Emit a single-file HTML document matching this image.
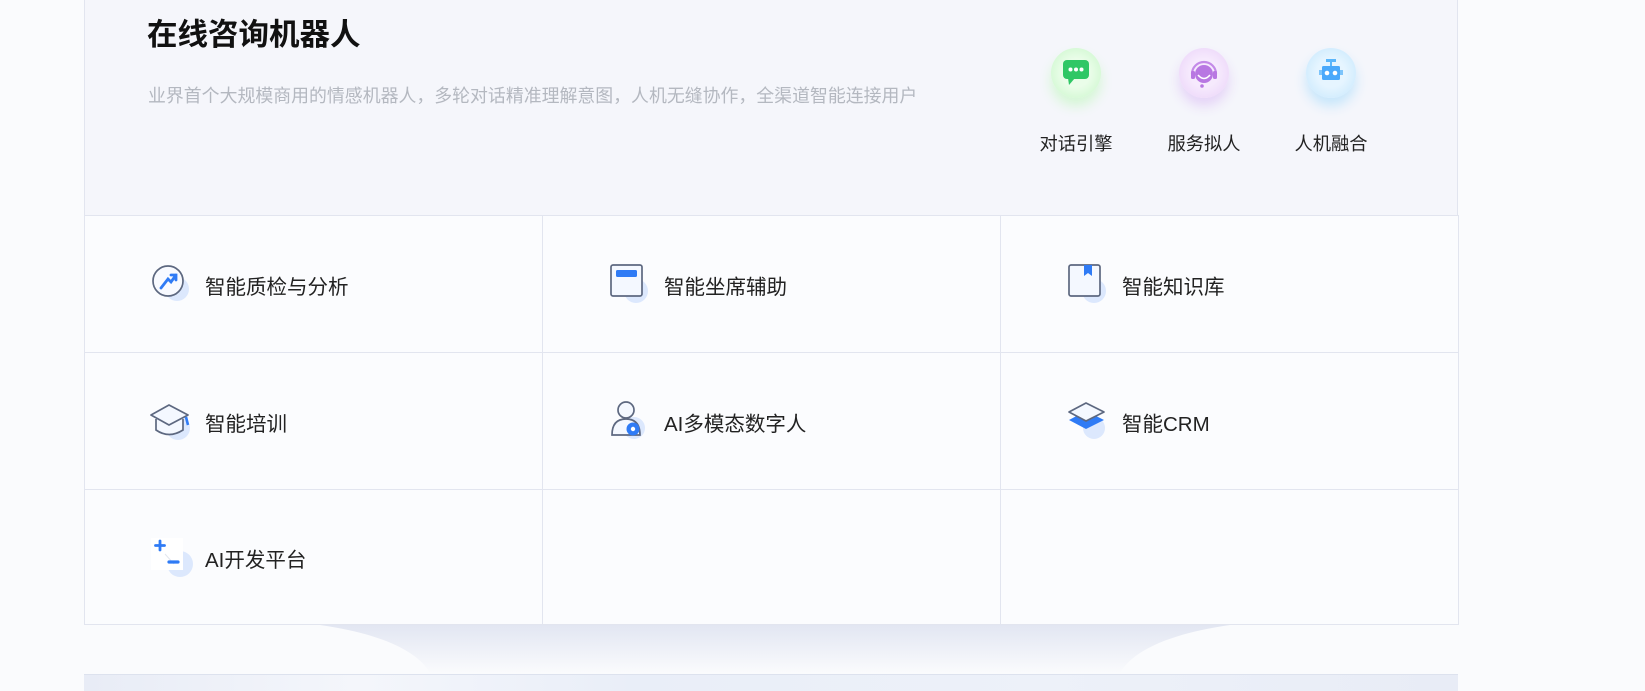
<!DOCTYPE html>
<html><head><meta charset="utf-8"><style>
*{margin:0;padding:0;box-sizing:border-box}
body{width:1645px;height:691px;overflow:hidden;background:#fafbfd;font-family:"Liberation Sans","Noto Sans CJK SC",sans-serif;position:relative;color:#222}
.top{position:absolute;left:84px;top:0;width:1374px;height:216px;background:#f5f6fb;border-left:1px solid #e2e5ef;border-right:1px solid #e2e5ef}
h1{position:absolute;left:147px;top:10px;font-size:30.5px;font-weight:bold;color:#111}
.sub{position:absolute;left:148px;top:82px;font-size:17.9px;color:#b4b8c0}
.feat{position:absolute;top:48px;width:120px;text-align:center;font-size:18.3px;color:#222}
.feat .c{width:50px;height:50px;border-radius:50%;margin:0 auto 32px}
.grid{position:absolute;left:84px;top:215px;width:1375px;height:410px;border:1px solid #e2e5ef;background:#fbfcfe}
.v{position:absolute;top:215px;width:1px;height:410px;background:#e2e5ef}
.h{position:absolute;left:84px;width:1375px;height:1px;background:#e2e5ef}
.cell{position:absolute;font-size:20.5px;color:#222;display:flex;align-items:center}
.cell svg{margin-right:10px}
.curve{position:absolute;left:320px;top:625px;width:910px;height:48px;background:linear-gradient(#e2e6f2,#fafbfd);clip-path:path('M0 0 H910 C840 10 810 30 800 48 H110 C100 30 70 10 0 0 Z')}
.banner{position:absolute;left:84px;top:674px;width:1374px;height:17px;background:linear-gradient(90deg,#e8ecf6,#f4f6fb 20%,#e9eef8 40%,#edf1f9 70%,#e8ecf6);border-top:1px solid #dde2ee}
</style></head><body>
<div class="top"></div>
<h1>在线咨询机器人</h1>
<div class="sub">业界首个大规模商用的情感机器人，多轮对话精准理解意图，人机无缝协作，全渠道智能连接用户</div>
<div class="feat" style="left:1016px"><div class="c" style="background:radial-gradient(circle,#eafde9 40%,#c6f6c7);box-shadow:0 8px 12px #d4f7d4"><svg width="50" height="50"><rect x="12" y="12" width="26" height="19" rx="4" fill="#2fc765"/><path d="M17 30 L18 37 L24 30Z" fill="#2fc765"/><circle cx="19.5" cy="21.5" r="2" fill="#fff"/><circle cx="25" cy="21.5" r="2" fill="#fff"/><circle cx="30.5" cy="21.5" r="2" fill="#fff"/></svg></div>对话引擎</div>
<div class="feat" style="left:1144px"><div class="c" style="background:radial-gradient(circle,#f6eafd 40%,#e9d0f8);box-shadow:0 8px 12px #e5d3f7"><svg width="50" height="50"><path d="M13 26 A12 12 0 0 1 37 26" stroke="#c48ae8" stroke-width="2.2" fill="none"/><circle cx="25" cy="26" r="9" fill="#b877e2"/><path d="M19 27 Q25 34 31 27" stroke="#fff" stroke-width="1.6" fill="none"/><rect x="12" y="23" width="4" height="8" rx="1.5" fill="#b877e2"/><rect x="34" y="23" width="4" height="8" rx="1.5" fill="#b877e2"/><circle cx="23" cy="38" r="1.8" fill="#b877e2"/></svg></div>服务拟人</div>
<div class="feat" style="left:1271px"><div class="c" style="background:radial-gradient(circle,#e6f5ff 40%,#c3e6fd);box-shadow:0 8px 12px #c6e6fb"><svg width="50" height="50"><rect x="20" y="11" width="10" height="3" fill="#5bb6fb"/><rect x="24" y="13" width="2" height="5" fill="#5bb6fb"/><rect x="16" y="18" width="18" height="14" rx="1.5" fill="#4aa9fb"/><rect x="13" y="22" width="3" height="5" fill="#7cc4fb"/><rect x="34" y="22" width="3" height="5" fill="#7cc4fb"/><circle cx="21" cy="25" r="2.3" fill="#fff"/><circle cx="29" cy="25" r="2.3" fill="#fff"/></svg></div>人机融合</div>

<div class="grid"></div>
<div class="v" style="left:542px"></div><div class="v" style="left:1000px"></div>
<div class="h" style="top:352px"></div><div class="h" style="top:489px"></div>

<div class="cell" style="left:150px;top:263px"><svg width="45" height="44"><circle cx="27" cy="26" r="12" fill="#dce8fd"/><circle cx="18" cy="18" r="15" fill="#f8faff" stroke="#5d6880" stroke-width="1.7"/><path d="M11 25 L18 16 L21 19 L26 12 M21 12 H26 V17" stroke="#2f7bf5" stroke-width="2.8" fill="none" stroke-linecap="round"/></svg>智能质检与分析</div>
<div class="cell" style="left:609px;top:263px"><svg width="45" height="44"><circle cx="27" cy="28" r="12" fill="#dce8fd"/><rect x="2" y="2" width="31" height="31" rx="2" fill="#f4f8ff" stroke="#5d6880" stroke-width="1.7"/><rect x="7" y="7" width="21" height="7" rx="1.5" fill="#2f7bf5"/></svg>智能坐席辅助</div>
<div class="cell" style="left:1067px;top:263px"><svg width="45" height="44"><circle cx="27" cy="28" r="12" fill="#dce8fd"/><rect x="2" y="2" width="31" height="31" rx="2" fill="#f4f8ff" stroke="#5d6880" stroke-width="1.7"/><path d="M17 2 H25 V13 L21 10 L17 13Z" fill="#2f7bf5"/></svg>智能知识库</div>

<div class="cell" style="left:150px;top:400px"><svg width="45" height="44"><circle cx="28" cy="28" r="12" fill="#dce8fd"/><path d="M6 19 V30 Q19 39 33 30 V19" fill="#f4f8ff" stroke="#5d6880" stroke-width="1.7"/><path d="M1 15 L19 5 L38 15 L19 25Z" fill="#f4f8ff" stroke="#5d6880" stroke-width="1.7" stroke-linejoin="round"/><path d="M36 17 L38 25" stroke="#2f7bf5" stroke-width="2.6"/></svg>智能培训</div>
<div class="cell" style="left:609px;top:400px"><svg width="45" height="44"><circle cx="25" cy="28" r="11" fill="#dce8fd"/><circle cx="17" cy="10" r="8" fill="#f4f8ff" stroke="#5d6880" stroke-width="1.7"/><path d="M3 35 Q3 19 17 19 Q31 19 31 35Z" fill="#f4f8ff" stroke="#5d6880" stroke-width="1.7"/><circle cx="24" cy="29" r="6.5" fill="#2f7bf5"/><circle cx="24" cy="29" r="2.2" fill="#fff"/></svg>AI多模态数字人</div>
<div class="cell" style="left:1067px;top:400px"><svg width="45" height="44"><circle cx="27" cy="28" r="11" fill="#dce8fd"/><path d="M2 20 L19 11 L37 20 L19 29Z" fill="#2f7bf5"/><path d="M2 12 L19 3 L37 12 L19 21Z" fill="#f4f8ff" stroke="#5d6880" stroke-width="1.7" stroke-linejoin="round"/></svg>智能CRM</div>

<div class="cell" style="left:150px;top:536px"><svg width="45" height="44"><circle cx="30" cy="28" r="13" fill="#dce8fd"/><rect x="1" y="2" width="32" height="32" fill="#fff"/><path d="M15 18 L24 28" stroke="#e2e6ee" stroke-width="1"/><path d="M10 5 V14 M5.5 9.5 H14.5" stroke="#2f7bf5" stroke-width="2.8" stroke-linecap="round"/><path d="M19 26 H28" stroke="#2f7bf5" stroke-width="3.2" stroke-linecap="round"/></svg>AI开发平台</div>

<div class="curve"></div>
<div class="banner"></div>
</body></html>
